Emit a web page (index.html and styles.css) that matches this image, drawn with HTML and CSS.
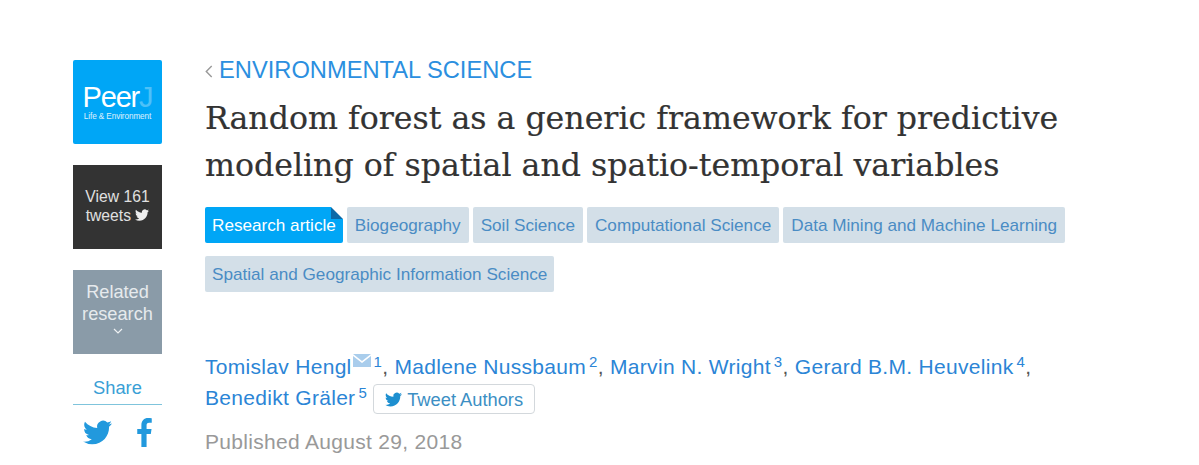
FILE: index.html
```html
<!DOCTYPE html>
<html lang="en">
<head>
    <meta charset="UTF-8">
    <meta name="viewport" content="width=device-width, initial-scale=1.0">
    <link rel="stylesheet" href="styles.css">
    <title>Random forest as a generic framework</title>
</head>
<body>
    <svg class="defs" width="0" height="0">
        <symbol id="bird" viewBox="0 0 24 24"><path d="M23.95 4.57a10 10 0 0 1-2.82.77 4.96 4.96 0 0 0 2.16-2.72c-.95.55-2 .96-3.13 1.18a4.92 4.92 0 0 0-8.38 4.48C7.69 8.1 4.07 6.13 1.64 3.16a4.82 4.82 0 0 0-.66 2.47c0 1.71.87 3.21 2.19 4.1a4.9 4.9 0 0 1-2.23-.61v.06a4.92 4.92 0 0 0 3.95 4.83 5 5 0 0 1-2.21.08 4.94 4.94 0 0 0 4.6 3.42A9.87 9.87 0 0 1 0 19.54a14 14 0 0 0 7.56 2.21c9.05 0 14-7.5 14-13.98 0-.21 0-.42-.02-.63A9.94 9.94 0 0 0 24 4.59z"/></symbol>
    </svg>
    <div class="page">
        <aside class="side">
            <a class="logo">
                <span class="logo-name">Peer<span class="logo-j">J</span></span>
                <span class="logo-sub">Life &amp; Environment</span>
            </a>
            <a class="tweets">View 161<br>tweets <svg class="bird-sm"><use href="#bird"/></svg></a>
            <a class="related">Related<br>research
                <svg class="chev" viewBox="0 0 10 6"><path d="M1 1l4 4 4-4"/></svg>
            </a>
            <div class="share">
                <div class="share-title">Share</div>
                <div class="share-icons">
                    <svg class="share-bird"><use href="#bird"/></svg>
                    <svg class="share-fb" viewBox="0 0 14 28"><path d="M4 28V15.500H0v-5h4V7c0-4.500 2.500-7 6.500-7 1.500 0 2.800.1 3.500.2v4.500h-2.500C9.500 4.700 9 5.700 9 7.200v3.300h4.800l-.7 5H9V28z"/></svg>
                </div>
            </div>
        </aside>
        <main class="article">
            <a class="section"><svg class="back" viewBox="0 0 7 12"><path d="M6 1L1 6l5 5"/></svg>ENVIRONMENTAL SCIENCE</a>
            <h1 class="title">Random forest as a generic framework for predictive modeling of spatial and spatio-temporal variables</h1>
            <div class="tags">
                <a class="tag tag-main">Research article</a>
                <a class="tag">Biogeography</a>
                <a class="tag">Soil Science</a>
                <a class="tag">Computational Science</a>
                <a class="tag">Data Mining and Machine Learning</a>
                <a class="tag">Spatial and Geographic Information Science</a>
            </div>
            <div class="authors">
                <a>Tomislav Hengl</a><svg class="mail" viewBox="0 0 18 13"><path d="M0 0h18L9 7z"/><path d="M0 2l9 7 9-7v11H0z"/></svg><sup>1</sup>, <a>Madlene Nussbaum</a><sup>2</sup>, <a>Marvin N. Wright</a><sup>3</sup>, <a>Gerard B.M. Heuvelink</a><sup>4</sup>,<br>
                <a>Benedikt Gräler</a><sup>5</sup>
                <a class="tweet-btn"><svg class="bird-btn"><use href="#bird"/></svg>Tweet Authors</a>
            </div>
            <div class="published">Published August 29, 2018</div>
        </main>
    </div>
</body>
</html>
```

FILE: styles.css
```css
* {
 margin: 0;
 padding: 0;
 box-sizing: border-box;
}

html, body {
 height: 465px;
 overflow: hidden;
}

body {
 background-color: #fff;
 font-family: "Liberation Sans", Arial, sans-serif;
}

.defs {
 position: absolute;
}

.page {
 display: flex;
 gap: 43px;
 padding: 60px 0 0 73px;
}

.side {
 width: 89px;
 flex-shrink: 0;
 display: flex;
 flex-direction: column;
 text-align: center;
}

.logo {
 height: 84px;
 background-color: #00a6f6;
 border-radius: 2px;
 color: #fff;
 display: flex;
 flex-direction: column;
 align-items: center;
 padding-top: 22px;
}

.logo-name {
 font-size: 29px;
 line-height: 30px;
 letter-spacing: -1.2px;
}

.logo-j {
 opacity: 0.3;
}

.logo-sub {
 font-size: 8.2px;
 line-height: 9px;
 letter-spacing: -0.1px;
 opacity: 0.85;
}

.tweets {
 height: 84px;
 margin-top: 21px;
 background-color: #333;
 color: #e0e0e0;
 font-size: 15.7px;
 line-height: 19px;
 padding-top: 22px;
}

.bird-sm {
 width: 14px;
 height: 14px;
 fill: #eee;
 vertical-align: -1px;
}

.related {
 height: 84px;
 margin-top: 21px;
 background-color: #8a9ba8;
 color: #e6eaed;
 font-size: 18.2px;
 line-height: 22px;
 padding-top: 11px;
}

.chev {
 display: block;
 width: 10px;
 height: 6px;
 margin: 3px auto 0;
 fill: none;
 stroke: #eef1f3;
 stroke-width: 1.2;
}

.share {
 margin-top: 23px;
}

.share-title {
 color: #3a9fd6;
 font-size: 18.3px;
 line-height: 22px;
 padding-bottom: 5px;
 border-bottom: 1px solid #7fc4dc;
}

.share-icons {
 display: flex;
 align-items: center;
 justify-content: space-between;
 padding: 13px 10px 0;
}

.share-bird {
 width: 29px;
 height: 29px;
 fill: #2299dd;
}

.share-fb {
 width: 15px;
 height: 29px;
 fill: #2299dd;
}

.section {
 display: block;
 color: #2b8fdf;
 font-size: 23.7px;
 line-height: 20px;
}

.back {
 width: 8px;
 height: 13px;
 margin-right: 6px;
 fill: none;
 stroke: #999;
 stroke-width: 1.3;
}

.title {
 margin-top: 15px;
 width: 880px;
 color: #333;
 font-family: "DejaVu Serif", "Liberation Serif", serif;
 font-size: 31.6px;
 line-height: 47px;
 font-weight: 400;
 -webkit-text-stroke: 0.2px #333;
}

.tags {
 display: flex;
 flex-wrap: wrap;
 gap: 13px 4px;
 width: 900px;
 margin-top: 18px;
}

.tag {
 height: 36px;
 padding: 0 8px;
 background-color: #d3dfe8;
 border-radius: 2px;
 color: #4a8cc4;
 font-size: 17.15px;
 line-height: 36px;
}

.tag:last-child {
 padding: 0 7px;
}

.tag-main {
 position: relative;
 padding: 0 7px;
 background-color: #00a6f6;
 color: #fff;
}

/* folded corner */
.tag-main::after {
 content: "";
 position: absolute;
 top: 0;
 right: 0;
 border: 6px solid;
 border-color: #fff #fff #0b6aa8 #0b6aa8;
}

.authors {
 margin-top: 59px;
 color: #555;
 font-size: 21px;
 letter-spacing: 0.3px;
 line-height: 31px;
}

.authors a {
 color: #2b85d6;
}

.authors sup {
 margin-left: 3px;
 font-size: 15px;
 line-height: 0;
 vertical-align: 7px;
 color: #2b85d6;
}

.mail {
 width: 18px;
 height: 13px;
 margin-left: 1px;
 fill: #a9cdec;
 vertical-align: 7px;
}

.authors .tweet-btn {
 display: inline-flex;
 align-items: center;
 height: 30px;
 padding: 0 11px;
 margin: 2px 0 0 0;
 border: 1px solid #d3d8dc;
 border-radius: 4px;
 color: #3c8fc4;
 font-size: 18.3px;
 letter-spacing: 0;
 vertical-align: top;
}

.bird-btn {
 width: 17px;
 height: 17px;
 margin-right: 5px;
 fill: #1d8fd0;
}

.published {
 margin-top: 16px;
 color: #999;
 font-size: 21px;
 letter-spacing: 0.3px;
 line-height: 24px;
}
```
